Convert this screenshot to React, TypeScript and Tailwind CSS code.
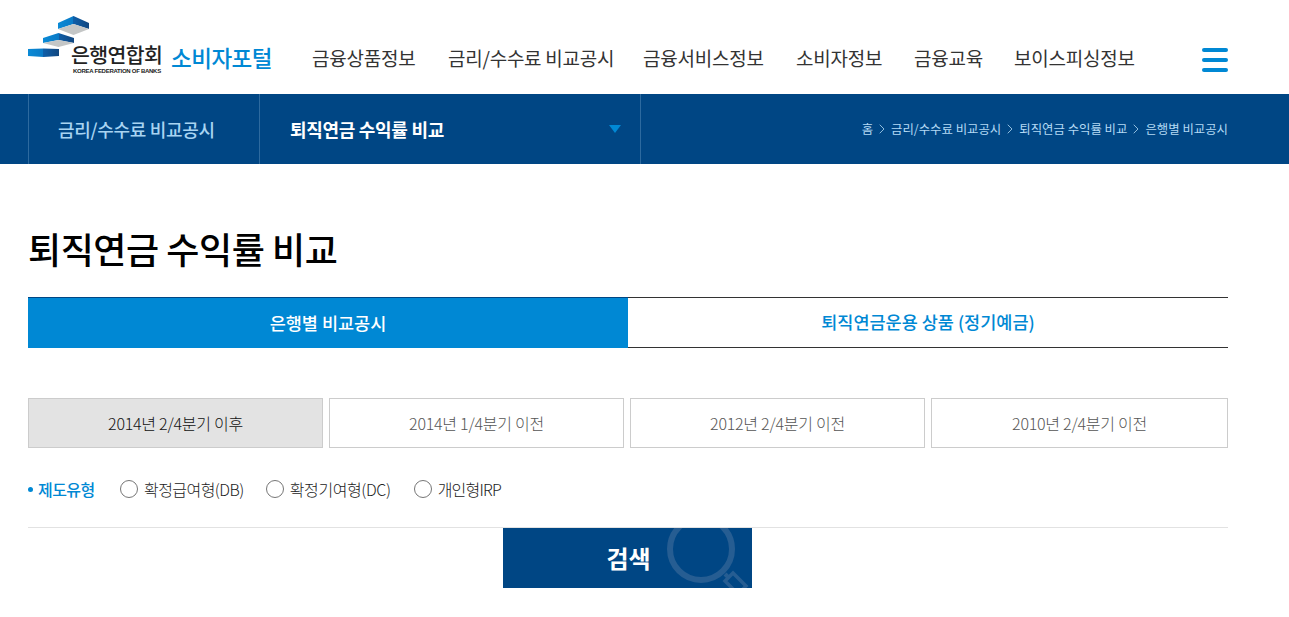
import { ChevronRight } from "lucide-react";

const font = "font-['Noto_Sans_CJK_KR','Noto_Sans',sans-serif]";
const menus = [
  { label: "금융상품정보", width: "w-[105px]" },
  { label: "금리/수수료 비교공시", width: "w-[164px]" },
  { label: "금융서비스정보", width: "w-[122px]" },
  { label: "소비자정보", width: "w-[87px]" },
  { label: "금융교육", width: "w-[69px]" },
  { label: "보이스피싱정보", width: "w-[122px]" },
];
const crumbs = ["홈", "금리/수수료 비교공시", "퇴직연금 수익률 비교", "은행별 비교공시"];
const periods = ["2014년 2/4분기 이후", "2014년 1/4분기 이전", "2012년 2/4분기 이전", "2010년 2/4분기 이전"];
const radios = [
  { label: "확정급여형(DB)", cls: "mr-[22px] tracking-[-0.55px]" },
  { label: "확정기여형(DC)", cls: "mr-[23px] tracking-[-0.4px]" },
  { label: "개인형IRP", cls: "tracking-[-0.8px]" },
];

function LogoMark() {
  return (
    <svg width="63" height="42" viewBox="0 0 63 42" className="shrink-0">
      <defs>
        <linearGradient id="lg" x1="0" x2="1" y1="0" y2="0">
          <stop offset="0" stopColor="#0a8ad6" />
          <stop offset="0.5" stopColor="#0a7ac6" />
          <stop offset="0.5" stopColor="#0f5ea8" />
          <stop offset="1" stopColor="#11467f" />
        </linearGradient>
      </defs>
      <polygon points="30,7 45.5,0 61,7 61,13 45.5,8 30,13" fill="url(#lg)" />
      <polygon points="30,13 45.5,8 61,13 45.5,19" fill="#c4c6c6" />
      <polygon points="15,22 30.5,17 46,22 46,27 30.5,24 15,27" fill="url(#lg)" />
      <polygon points="15,27 30.5,24 46,27 30.5,31" fill="#c4c6c6" />
      <polygon points="0,33 15.5,32.5 31,33 31,40 15.5,41 0,40" fill="url(#lg)" />
    </svg>
  );
}

export default function App() {
  return (
    <div className={`${font} w-full bg-white text-[#333]`}>
      <header className="h-[94px] pl-[28px] pr-[61px] flex items-start">
        <div className="w-[244px] h-[94px] relative shrink-0">
          <div className="pt-[16px]">
            <LogoMark />
          </div>
          <div className="absolute left-[43px] top-[41px] text-[#222] leading-none">
            <div className="text-[20.5px] font-medium tracking-[-0.6px] leading-[27px]">은행연합회</div>
            <div className="text-[6px] font-bold font-['Liberation_Sans',sans-serif] leading-[6px] ml-[2px] whitespace-nowrap tracking-[-0.27px]">
              KOREA FEDERATION OF BANKS
            </div>
          </div>
          <div className="absolute left-[143px] top-[41px] text-[#0088d4] text-[22.5px] font-medium leading-[33px] tracking-[-0.5px] whitespace-nowrap">
            소비자포털
          </div>
        </div>
        <nav className="flex ml-[40px] mt-[44px] gap-[31px] text-[19px] text-[#333] whitespace-nowrap tracking-[-0.25px]">
          {menus.map((m) => (
            <a key={m.label} className={`${m.width} block leading-[28px]`}>
              {m.label}
            </a>
          ))}
        </nav>
        <button type="button" className="ml-auto mt-[48px] w-[26px] flex flex-col gap-[6px]">
          <span className="h-[4px] rounded-full bg-[#0088d4]" />
          <span className="h-[4px] rounded-full bg-[#0088d4]" />
          <span className="h-[4px] rounded-full bg-[#0088d4]" />
        </button>
      </header>

      <div className="h-[70px] bg-[#004684] pl-[28px] pr-[61px] flex items-center">
        <div className="w-[232px] h-full border-x border-[#2d6a9f] flex items-center pl-[29px] text-[18px] text-[#a8d4f2] font-medium tracking-[-0.3px] shrink-0">
          금리/수수료 비교공시
        </div>
        <div className="w-[381px] h-full border-r border-[#2d6a9f] flex items-center justify-between pl-[30px] pr-[19px] text-[18px] text-white font-bold tracking-[-0.3px] shrink-0">
          <span>퇴직연금 수익률 비교</span>
          <span className="w-0 h-0 border-x-[6px] border-x-transparent border-t-[8px] border-t-[#0088d4]" />
        </div>
        <div className="ml-auto flex items-center text-[12.4px] text-[#b4daf4]">
          {crumbs.map((c, i) => (
            <span key={c} className="flex items-center">
              {i > 0 && <ChevronRight className="mx-[1px] h-[16px] w-[16px]" strokeWidth={1.2} />}
              {c}
            </span>
          ))}
        </div>
      </div>

      <main className="w-[1200px] ml-[28px]">
        <h1 className="mt-[57px] text-[36px] leading-[54px] font-medium text-black tracking-[-0.45px]">퇴직연금 수익률 비교</h1>

        <div className="mt-[22px] grid grid-cols-2 h-[51px] text-[17.5px] font-medium">
          <div className="bg-[#0088d4] border-t border-[#004684] text-white flex items-center justify-center">은행별 비교공시</div>
          <div className="border-y border-[#333] text-[#0088d4] flex items-center justify-center">퇴직연금운용 상품 (정기예금)</div>
        </div>

        <div className="mt-[50px] flex gap-[6px] text-[16px] tracking-[-0.25px] font-light">
          {periods.map((p, i) => (
            <div
              key={p}
              className={
                i === 0
                  ? "w-[295px] h-[50px] border border-[#ccc] bg-[#e3e3e3] text-[#111] flex items-center justify-center"
                  : i === 3
                    ? "w-[297px] h-[50px] border border-[#ccc] text-[#555] flex items-center justify-center"
                    : "w-[295px] h-[50px] border border-[#ccc] text-[#555] flex items-center justify-center"
              }
            >
              {p}
            </div>
          ))}
        </div>

        <div className="mt-[25px] h-[55px] flex items-start border-b border-[#e2e2e2] text-[16px]">
          <div className="flex items-center h-[32px] text-[#0088d4] font-medium tracking-[-0.55px] w-[92px] shrink-0">
            <span className="w-[5px] h-[5px] rounded-full bg-[#0088d4] mr-[5px]" />
            제도유형
          </div>
          {radios.map((r) => (
            <label key={r.label} className={`${r.cls} flex items-center h-[32px] text-[#222] font-light`}>
              <span className="w-[18px] h-[18px] rounded-full border border-[#767676] mr-[6px] bg-white" />
              {r.label}
            </label>
          ))}
        </div>

        <div className="flex justify-center pb-[29px] -translate-x-[1px]">
          <button type="button" className="relative w-[249px] h-[60px] bg-[#004684] overflow-hidden text-white text-[24px] font-bold flex items-center justify-center">
            <svg className="absolute inset-0" width="249" height="60" viewBox="0 0 249 60" fill="none" stroke="#265d92">
              <circle cx="198" cy="21" r="31" strokeWidth="6" />
              <path d="M222 46 L226 50" strokeWidth="4" />
              <path d="M230 45 L222 53 L235 66 L243 58 Z" strokeWidth="3.5" />
            </svg>
            <span className="relative ml-[3px]">검색</span>
          </button>
        </div>
      </main>
    </div>
  );
}
